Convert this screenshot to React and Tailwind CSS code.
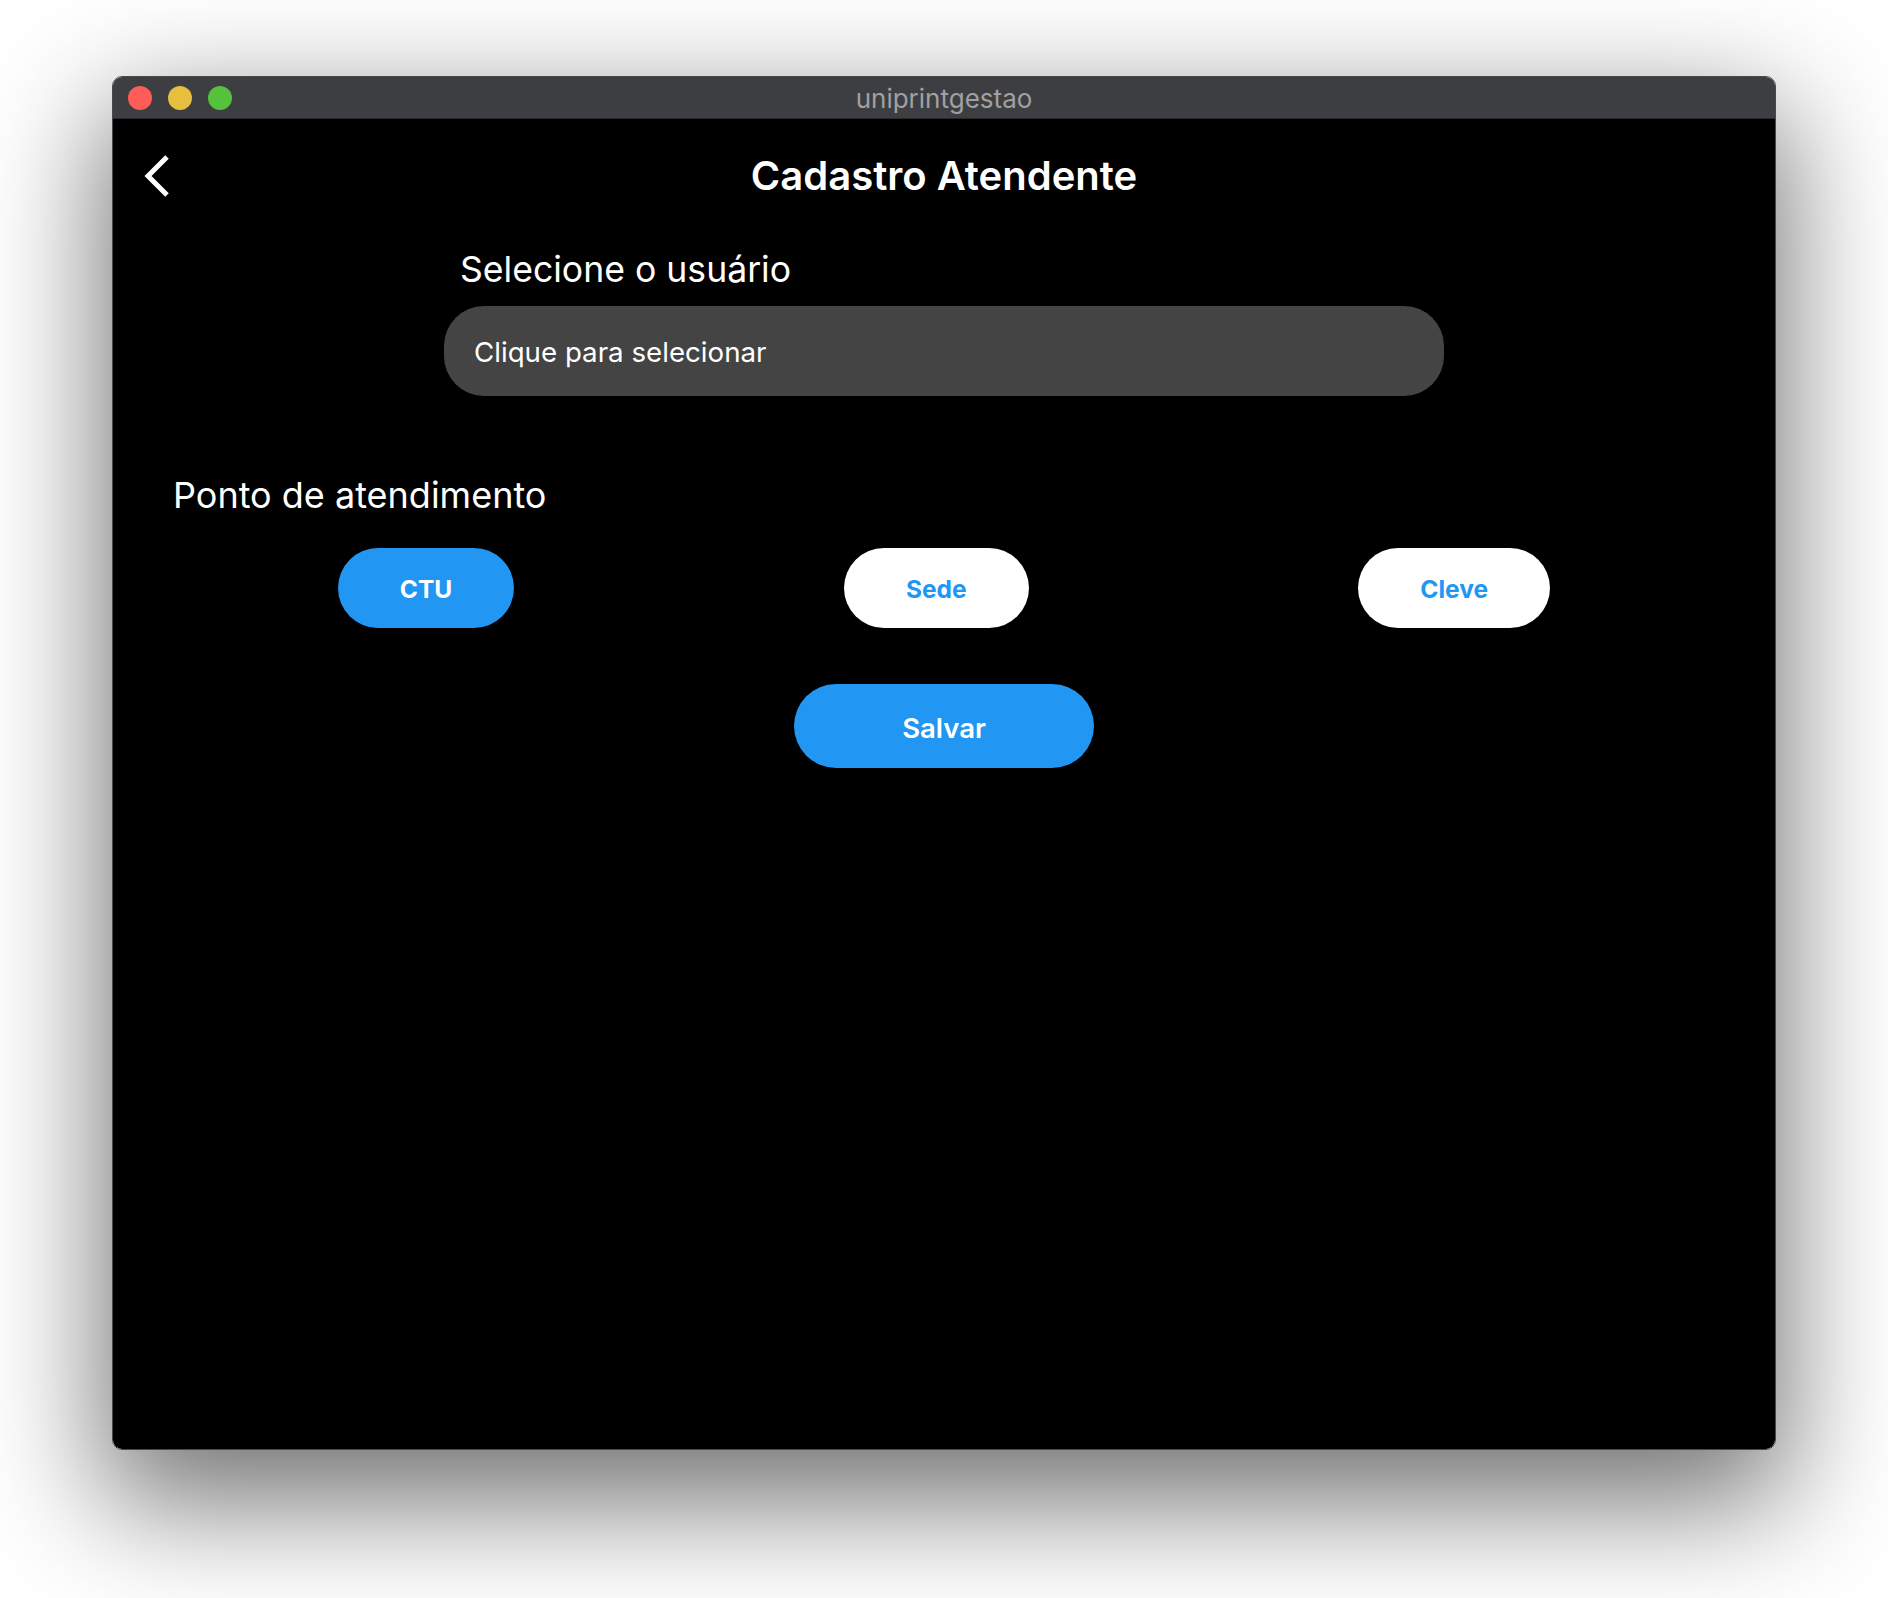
import React from "react";

function Chevron() {
  return (
    <svg width="28" height="42" viewBox="0 0 28 42" className="block">
      <path d="M24 2 L5 21 L24 40" fill="none" stroke="#ffffff" strokeWidth="5" strokeLinecap="butt" strokeLinejoin="miter" />
    </svg>
  );
}

function Option({ label, active }) {
  return (
    <div
      className={
        active
          ? "h-[80px] px-[62px] pt-[4px] rounded-[40px] bg-[#2196f3] text-white flex items-center justify-center text-[24.5px] font-bold leading-none"
          : "h-[80px] px-[62px] pt-[4px] rounded-[40px] bg-white text-[#2196f3] flex items-center justify-center text-[24.5px] font-bold leading-none"
      }
    >
      {label}
    </div>
  );
}

export default function App() {
  return (
    <div
      className="w-[1888px] h-[1598px] bg-white pt-[76px] pl-[112px]"
      style={{ fontFamily: 'Inter, "Noto Sans", "Liberation Sans", sans-serif' }}
    >
      <div className="w-[1664px] h-[1374px] rounded-[10px] overflow-hidden flex flex-col border border-[#4a4a4a] shadow-[0_44px_120px_10px_rgba(0,0,0,0.55)]">
        <div className="h-[42px] shrink-0 bg-[#3d3e41] border-b border-[#2a2a2c] grid grid-cols-[1fr_auto_1fr] items-center">
          <div className="flex items-center gap-[16px] pl-[15px]">
            <div className="w-[24px] h-[24px] rounded-full bg-[#fd5d56]" />
            <div className="w-[24px] h-[24px] rounded-full bg-[#e6bf3e]" />
            <div className="w-[24px] h-[24px] rounded-full bg-[#56c13d]" />
          </div>
          <div className="text-[26px] leading-none text-[#a0a0a2] pt-[3px]">uniprintgestao</div>
          <div />
        </div>
        <div className="flex-1 bg-black flex flex-col">
          <div className="grid grid-cols-[1fr_auto_1fr] items-center pt-[36px]">
            <div className="pl-[30px]">
              <Chevron />
            </div>
            <div className="text-[40px] leading-none font-semibold text-white">Cadastro Atendente</div>
            <div />
          </div>
          <div className="w-[1000px] mx-auto mt-[55px]">
            <div className="text-[35.6px] leading-none text-white pl-[16px]">Selecione o usuário</div>
            <div className="mt-[18px] h-[90px] rounded-[40px] bg-[#444444] flex items-center pl-[30px]">
              <span className="text-[27.7px] leading-none text-white pt-[5px]">Clique para selecionar</span>
            </div>
          </div>
          <div className="px-[60px] mt-[81px]">
            <div className="text-[36px] leading-none text-white">Ponto de atendimento</div>
            <div className="mt-[35px] flex justify-around">
              <Option label="CTU" active />
              <Option label="Sede" />
              <Option label="Cleve" />
            </div>
          </div>
          <div className="mt-[56px] flex justify-center">
            <div className="w-[300px] h-[84px] pt-[6px] rounded-[42px] bg-[#2196f3] text-white flex items-center justify-center text-[27.5px] font-semibold leading-none">
              Salvar
            </div>
          </div>
        </div>
      </div>
    </div>
  );
}
